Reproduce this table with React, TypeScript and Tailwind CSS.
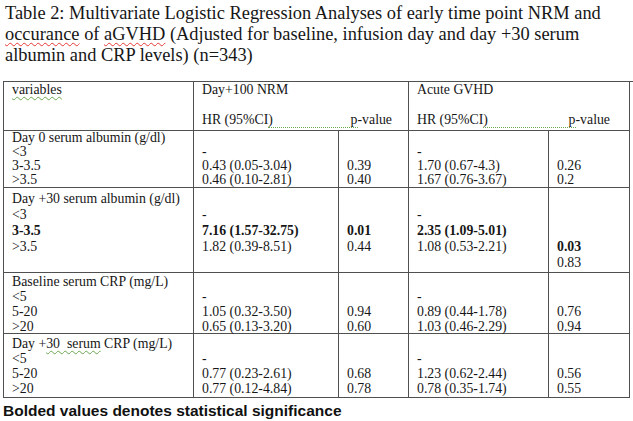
import React from 'react';

type Line = React.ReactNode;

const B = ({ children }: { children: React.ReactNode }) => <span className="font-bold">{children}</span>;

const Spell = ({ children, red }: { children: React.ReactNode; red?: boolean }) => (
  <span
    className={
      red
        ? 'underline decoration-wavy decoration-[#e53935] decoration-1 underline-offset-2'
        : 'underline decoration-wavy decoration-[#6aa84f] decoration-1 underline-offset-2'
    }
  >
    {children}
  </span>
);

interface BlockDef {
  size: string; // height + line height + top padding for the whole row
  cells: Line[][];
}

const blocks: BlockDef[] = [
  {
    size: 'h-[57px] leading-[14px] pt-0',
    cells: [
      ['Day 0 serum albumin (g/dl)', '<3', '3-3.5', '>3.5'],
      ['', '-', '0.43 (0.05-3.04)', '0.46 (0.10-2.81)'],
      ['', '', '0.39', '0.40'],
      ['', '-', '1.70 (0.67-4.3)', '1.67 (0.76-3.67)'],
      ['', '', '0.26', '0.2'],
    ],
  },
  {
    size: 'h-[85px] leading-[16px] pt-[3px]',
    cells: [
      ['Day +30 serum albumin (g/dl)', '<3', <B>3-3.5</B>, '>3.5'],
      ['', '-', <B>7.16 (1.57-32.75)</B>, '1.82 (0.39-8.51)'],
      ['', '', <B>0.01</B>, '0.44'],
      ['', '-', <B>2.35 (1.09-5.01)</B>, '1.08 (0.53-2.21)'],
      ['', '', '', <B>0.03</B>, '0.83'],
    ],
  },
  {
    size: 'h-[61px] leading-[15px] pt-px',
    cells: [
      ['Baseline serum CRP (mg/L)', '<5', '5-20', '>20'],
      ['', '-', '1.05 (0.32-3.50)', '0.65 (0.13-3.20)'],
      ['', '', '0.94', '0.60'],
      ['', '-', '0.89 (0.44-1.78)', '1.03 (0.46-2.29)'],
      ['', '', '0.76', '0.94'],
    ],
  },
  {
    size: 'h-[64px] leading-[15px] pt-[2px]',
    cells: [
      [
        <>
          Day +<Spell>30&nbsp; serum</Spell> CRP (mg/L)
        </>,
        '<5',
        '5-20',
        '>20',
      ],
      ['', '-', '0.77 (0.23-2.61)', '0.77 (0.12-4.84)'],
      ['', '', '0.68', '0.78'],
      ['', '-', '1.23 (0.62-2.44)', '0.78 (0.35-1.74)'],
      ['', '', '0.56', '0.55'],
    ],
  },
];

const cellBorder = 'border-r border-b border-[#505050]';

const HeaderGroup = ({ title, pr }: { title: string; pr: string }) => (
  <div className={`col-span-2 ${cellBorder} pl-2 ${pr} h-[49px] leading-[15px] pt-0`}>
    <div>{title}</div>
    <div>&nbsp;</div>
    <div className="flex">
      <span>HR (95%CI</span>
      <span className="flex flex-1 justify-between border-b border-dotted border-[#6aa84f]">
        <span>)</span>
        <span>p</span>
      </span>
      <span>-value</span>
    </div>
  </div>
);

export default function App() {
  return (
    <div className="w-[633px] h-[421px] bg-white text-[#161616] overflow-hidden font-['Liberation_Serif','Times_New_Roman',serif]">
      <div className="pl-[5px] pt-[3px] text-[18.4px] leading-[21px] whitespace-nowrap">
        Table 2: Multivariate Logistic Regression Analyses of early time point NRM and
        <br />
        <Spell red>occurance</Spell> of <Spell red>aGVHD</Spell> (Adjusted for baseline, infusion day and day +30 serum
        <br />
        albumin and CRP levels) (n=343)
      </div>

      <div className="ml-[3px] mt-[15px] grid grid-cols-[190px_145px_70px_140px_81px] border-l border-t border-[#505050] text-[13.8px]">
        <div className={`${cellBorder} pl-2 h-[49px] leading-[15px]`}>
          <Spell>variables</Spell>
        </div>
        <HeaderGroup title="Day+100 NRM" pr="pr-4" />
        <HeaderGroup title="Acute GVHD" pr="pr-[19px]" />

        {blocks.map((block, bi) =>
          block.cells.map((lines, ci) => (
            <div key={`${bi}-${ci}`} className={`${cellBorder} pl-2 ${block.size}`}>
              {lines.map((line, li) => (
                <div key={li} className="whitespace-nowrap">
                  {line === '' ? '\u00a0' : line}
                </div>
              ))}
            </div>
          ))
        )}
      </div>

      <div className="pl-[3px] pt-[3px] font-['Liberation_Sans',Arial,sans-serif] font-bold text-[15.5px] leading-[19px] text-[#111] whitespace-nowrap">
        Bolded values denotes statistical significance
      </div>
    </div>
  );
}
